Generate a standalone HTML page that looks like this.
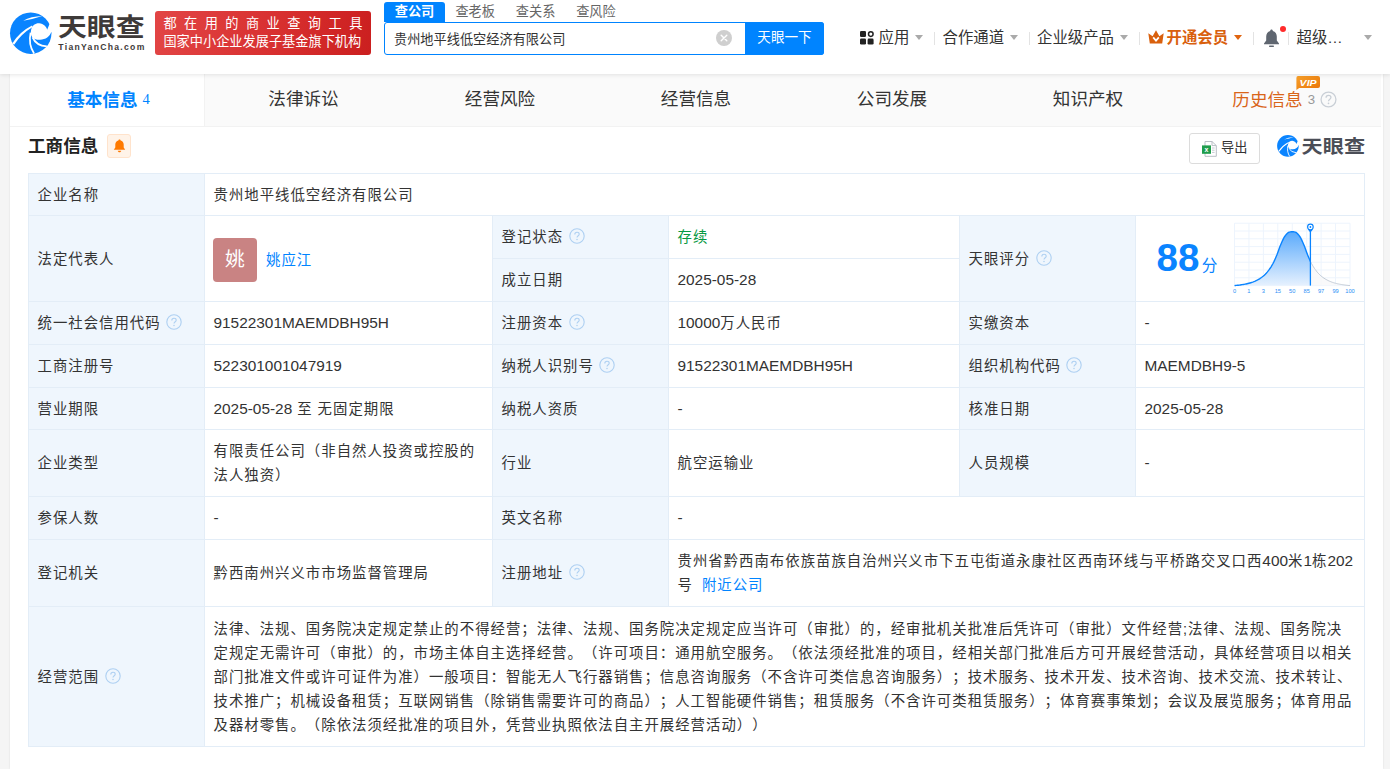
<!DOCTYPE html>
<html lang="zh-CN">
<head>
<meta charset="utf-8">
<title>贵州地平线低空经济有限公司 - 天眼查</title>
<style>
*{box-sizing:border-box;margin:0;padding:0}
html,body{width:1390px;height:769px;overflow:hidden}
body{background:#f5f5f5;font-family:"Liberation Sans","Noto Sans CJK SC",sans-serif;color:#333;font-size:15.4px;position:relative}
a{color:#0084ff;text-decoration:none}
.abs{position:absolute}
/* ---------- header ---------- */
#header{position:absolute;left:0;top:0;width:1390px;height:74px;background:#fff;box-shadow:0 1px 4px rgba(0,0,0,.10);z-index:5}
#logo{position:absolute;left:0;top:0;width:150px;height:74px}
#slogan{position:absolute;left:155px;top:11px;width:216px;height:44px;border-radius:3px;background:linear-gradient(100deg,#e24545 0%,#d83030 55%,#cb1f1f 100%);color:#fff;font-size:13.2px;line-height:18px;padding:4px 0 0 8.4px;white-space:nowrap}
#slogan .l1{letter-spacing:7.45px;display:block;height:18px}
#slogan .l2{display:block;height:18px}
#stabs{position:absolute;left:384px;top:2px;height:20px;font-size:13.2px;line-height:19px;color:#666;white-space:nowrap}
#stabs span{display:inline-block;width:60.4px;height:20px;text-align:center;vertical-align:top}
#stabs span.on{background:#0084ff;color:#fff;font-weight:bold;border-radius:3px 3px 0 0;width:61px}
#sbox{position:absolute;left:384px;top:22px;width:440px;height:33px;border:1px solid #0084ff;border-radius:3px;background:#fff}
#sbox .txt{position:absolute;left:9px;top:1px;line-height:32px;font-size:13.2px;color:#333;white-space:nowrap}
#sbox .clr{position:absolute;left:331px;top:7px;width:16px;height:16px}
#sbtn{position:absolute;left:745px;top:22px;width:79px;height:33px;background:#0084ff;border-radius:0 3px 3px 0;color:#fff;font-size:13.6px;line-height:32px;text-align:center;white-space:nowrap}
.nav{position:absolute;top:26px;height:24px;line-height:24px;font-size:15.4px;color:#333;white-space:nowrap}
.sep{position:absolute;top:32px;width:1px;height:13px;background:#e3e3e3}
.tri{position:absolute;top:35px;width:0;height:0;border-left:4px solid transparent;border-right:4px solid transparent;border-top:5px solid #aaa}
/* ---------- main ---------- */
#main{position:absolute;left:10px;top:74px;width:1373px;height:695px;background:#fff;box-shadow:0 0 2px rgba(0,0,0,.10)}
#tabs{position:absolute;left:0;top:0;width:1371px;height:53px;background:#fafafa;border-bottom:1px solid #f2f2f2;font-size:17.6px;white-space:nowrap}
#tabs .t{position:absolute;top:0;height:52px;line-height:51px;text-align:center;color:#333}
#tabs .t.on{background:#fff;color:#0084ff;font-weight:bold;border-right:1px solid #f2f2f2}
#tabs .t.on i{font-style:normal;font-weight:normal;font-family:"Liberation Serif",serif;font-size:14.5px;margin-left:5px;position:relative;top:-2px}
#tabs .t.his{color:#d9651a}
#title{position:absolute;left:18px;top:60px;font-size:17.6px;font-weight:bold;line-height:24px;color:#222}
#bellbox{position:absolute;left:97px;top:60px;width:24px;height:24px;border:1px solid #ffe3cc;background:#fff3e8;border-radius:3px}
#export{position:absolute;left:1179px;top:59px;width:71px;height:31px;border:1px solid #dcdcdc;border-radius:3px;background:#fff;font-size:13.2px;line-height:27px;color:#333;padding-left:31px;white-space:nowrap}
/* ---------- table ---------- */
#tb{position:absolute;left:18px;top:99px;width:1336px;border-collapse:collapse;table-layout:fixed;font-size:14.4px;letter-spacing:1px;line-height:24px;color:#333}
.en{font-size:15.4px;letter-spacing:0}
#tb td{text-spacing-trim:space-all;border:1px solid #e3edf7;padding:0 9px 0 8.5px;vertical-align:middle;word-break:break-all;background:#fff}
#tb td.k{background:#eff6fd}
.q{display:inline-block;width:16px;height:16px;vertical-align:-2.4px;margin-left:5.6px}
.g{color:#089944}
</style>
</head>
<body>

<div id="header">
  <!-- LOGO -->
  <svg id="logo" viewBox="0 0 150 74">
    <g id="swirl" transform="translate(10,12.6) scale(0.0644)">
      <circle cx="322" cy="320" r="322" fill="#0a84ff"/>
      <g transform="translate(-78,-70)" fill="#fff">
        <path d="M655,335 C645,290 600,245 530,237 C470,235 425,270 408,330 C398,370 398,420 425,455 C450,485 500,494 545,492 C630,490 700,440 718,372 L770,372 L770,245 L690,252 Z"/>
        <path d="M420,272 Q232,366 116,546 L142,568 Q254,398 430,294 Z"/>
        <path d="M284,198 Q400,128 580,124 Q440,172 284,198 Z"/>
        <path d="M398,380 C372,500 396,620 452,705" fill="none" stroke="#fff" stroke-width="27"/>
        <path d="M428,456 Q482,584 650,596" fill="none" stroke="#fff" stroke-width="27"/>
      </g>
    </g>
    <text x="58" y="36.4" font-family="'Noto Sans CJK SC','Liberation Sans',sans-serif" font-weight="700" font-size="25.4" fill="#3e3a39" textLength="86.5" lengthAdjust="spacingAndGlyphs">天眼查</text>
    <text x="58.3" y="50.2" font-family="'Liberation Sans',sans-serif" font-weight="bold" font-size="8.6" fill="#3e3a39" textLength="86" lengthAdjust="spacing">TianYanCha.com</text>
  </svg>

  <div id="slogan"><span class="l1">都在用的商业查询工具</span><span class="l2">国家中小企业发展子基金旗下机构</span></div>

  <div id="stabs"><span class="on">查公司</span><span>查老板</span><span>查关系</span><span>查风险</span></div>
  <div id="sbox">
    <div class="txt">贵州地平线低空经济有限公司</div>
    <svg class="clr" viewBox="0 0 16 16"><circle cx="8" cy="8" r="8" fill="#cfcfcf"/><path d="M5.2,5.2 L10.8,10.8 M10.8,5.2 L5.2,10.8" stroke="#fff" stroke-width="1.4" stroke-linecap="round"/></svg>
  </div>
  <div id="sbtn">天眼一下</div>

  <!-- nav -->
  <svg class="abs" style="left:860px;top:31px;width:14px;height:14px" viewBox="0 0 14 14"><rect x="0" y="0" width="6" height="6" rx="1.3" fill="#222"/><circle cx="10.8" cy="3.1" r="2.3" fill="none" stroke="#222" stroke-width="1.5"/><rect x="0" y="7.6" width="6" height="6" rx="1.3" fill="#222"/><rect x="7.6" y="7.6" width="6" height="6" rx="1.3" fill="#222"/></svg>
  <div class="nav" style="left:878.5px">应用</div><div class="tri" style="left:914.5px"></div>
  <div class="sep" style="left:934px"></div>
  <div class="nav" style="left:942.5px">合作通道</div><div class="tri" style="left:1009.5px"></div>
  <div class="sep" style="left:1029px"></div>
  <div class="nav" style="left:1037px">企业级产品</div><div class="tri" style="left:1119.5px"></div>
  <div class="sep" style="left:1139px"></div>
  <svg class="abs" style="left:1148px;top:30px;width:16px;height:14px" viewBox="0 0 16 14"><path d="M0.3,3.2 L4.6,6.2 L8,0.2 L11.4,6.2 L15.7,3.2 L14.2,13.6 L1.8,13.6 Z" fill="#d9600d"/><path d="M5.2,7.4 L8,10.6 L10.8,7.4" fill="none" stroke="#fff" stroke-width="1.7"/></svg>
  <div class="nav" style="left:1166.5px;color:#d9600d;font-weight:bold">开通会员</div><div class="tri" style="left:1234px;border-top-color:#e0640f"></div>
  <div class="sep" style="left:1253px"></div>
  <svg class="abs" style="left:1263px;top:29px;width:17px;height:19px" viewBox="0 0 17 19"><path d="M8.5,0.6 C9.3,0.6 9.8,1.2 9.8,2 C12.4,2.7 13.8,4.9 13.8,7.6 L13.8,11.6 L16,14.6 L16,15.2 L1,15.2 L1,14.6 L3.2,11.6 L3.2,7.6 C3.2,4.9 4.6,2.7 7.2,2 C7.2,1.2 7.7,0.6 8.5,0.6 Z" fill="#5f6670"/><rect x="6" y="16.6" width="5" height="1.4" rx=".7" fill="#5f6670"/></svg>
  <div class="abs" style="left:1280px;top:26px;width:6px;height:6px;border-radius:50%;background:#ff2b2b"></div>
  <div class="sep" style="left:1288px"></div>
  <div class="nav" style="left:1296.5px">超级…</div><div class="tri" style="left:1363.5px"></div>
</div>

<div id="main">
  <div id="tabs">
    <div class="t on" style="left:0;width:195px;padding-left:3px;line-height:53px">基本信息<i>4</i></div>
    <div class="t" style="left:195px;width:197px">法律诉讼</div>
    <div class="t" style="left:392px;width:196px">经营风险</div>
    <div class="t" style="left:588px;width:196px">经营信息</div>
    <div class="t" style="left:784px;width:196px">公司发展</div>
    <div class="t" style="left:980px;width:196px">知识产权</div>
    <div class="t his" style="left:1176px;width:195px"><span style="position:relative;left:1.2px;top:0.5px">历史信息<span style="font-size:13.2px;color:#999;margin-left:5px;position:relative;top:-2px">3</span><svg style="width:17px;height:17px;vertical-align:-2px;margin-left:5px" viewBox="0 0 16 16"><circle cx="8" cy="8" r="7" fill="none" stroke="#c9cfd6" stroke-width="1.2"/><path d="M5.7,6.3 C5.7,4.9 6.7,4.2 8,4.2 C9.3,4.2 10.3,5 10.3,6.2 C10.3,7.7 8,7.8 8,9.6" fill="none" stroke="#c9cfd6" stroke-width="1.2"/><circle cx="8" cy="11.6" r=".8" fill="#c9cfd6"/></svg></span>
      <svg class="abs" style="left:109.5px;top:2.3px;width:25px;height:14px" viewBox="0 0 25 14"><defs><linearGradient id="vg" x1="0" y1="0" x2="1" y2="1"><stop offset="0" stop-color="#f7a02a"/><stop offset="1" stop-color="#ea7407"/></linearGradient></defs><path d="M2,0 H22 Q24,0 24,2 V10 Q24,12 22,12 H3.2 L0.4,14 V2 Q0.4,0 2,0 Z" fill="url(#vg)"/><text x="3.6" y="9.8" font-family="'Liberation Sans',sans-serif" font-weight="bold" font-style="italic" font-size="9.6" fill="#fff" textLength="17" lengthAdjust="spacingAndGlyphs">VIP</text></svg>
    </div>
  </div>

  <div id="title">工商信息</div>
  <div id="bellbox"><svg style="position:absolute;left:4.5px;top:4px;width:13px;height:14px" viewBox="0 0 12 13"><path d="M6,0.4 C6.6,0.4 7,0.8 7,1.3 C8.9,1.8 9.9,3.3 9.9,5.2 L9.9,8 L11.3,10 L0.7,10 L2.1,8 L2.1,5.2 C2.1,3.3 3.1,1.8 5,1.3 C5,0.8 5.4,0.4 6,0.4 Z" fill="#ff7a00"/><path d="M4.4,10.8 H7.6 C7.4,11.7 6.8,12.2 6,12.2 C5.2,12.2 4.6,11.7 4.4,10.8 Z" fill="#ff7a00"/></svg></div>

  <div id="export">导出
    <svg class="abs" style="left:12px;top:7px;width:15px;height:16px" viewBox="0 0 15 16"><path d="M3,0.5 H10 L14.3,4.6 V15.3 H3 Z" fill="#fff" stroke="#b9bec5" stroke-width="1"/><path d="M10,0.5 V4.6 H14.3" fill="none" stroke="#b9bec5" stroke-width="1"/><path d="M10,7 H12.6 M10,9.2 H12.6 M10,11.4 H12.6" stroke="#c5cad1" stroke-width="1"/><rect x="0" y="4.4" width="9" height="8.4" fill="#1f9d4c"/><text x="4.5" y="11.2" text-anchor="middle" font-family="'Liberation Sans',sans-serif" font-weight="bold" font-size="7" fill="#fff">x</text></svg>
  </div>

  <svg class="abs" style="left:1266px;top:60px;width:92px;height:24px" viewBox="0 0 92 24">
    <g transform="translate(1.1,1.1) scale(0.0336)">
      <circle cx="322" cy="320" r="322" fill="#0a84ff"/>
      <g transform="translate(-78,-70)" fill="#fff">
        <path d="M655,335 C645,290 600,245 530,237 C470,235 425,270 408,330 C398,370 398,420 425,455 C450,485 500,494 545,492 C630,490 700,440 718,372 L770,372 L770,245 L690,252 Z"/>
        <path d="M420,272 Q232,366 116,546 L142,568 Q254,398 430,294 Z"/>
        <path d="M284,198 Q400,128 580,124 Q440,172 284,198 Z"/>
        <path d="M398,380 C372,500 396,620 452,705" fill="none" stroke="#fff" stroke-width="27"/>
        <path d="M428,456 Q482,584 650,596" fill="none" stroke="#fff" stroke-width="27"/>
      </g>
    </g>
    <text x="25.6" y="19" font-family="'Noto Sans CJK SC','Liberation Sans',sans-serif" font-weight="700" font-size="18.2" fill="#4b4e57" textLength="63.5" lengthAdjust="spacingAndGlyphs">天眼查</text>
  </svg>

  <table id="tb">
    <colgroup><col style="width:176px"><col style="width:288px"><col style="width:176px"><col style="width:291px"><col style="width:176px"><col style="width:229px"></colgroup>
    <tr style="height:42px"><td class="k">企业名称</td><td colspan="5">贵州地平线低空经济有限公司</td></tr>
    <tr style="height:43px"><td class="k" rowspan="2">法定代表人</td><td rowspan="2"><span style="display:inline-block;width:44px;height:44px;border-radius:4px;background:#c98383;color:#fff;font-size:19.8px;line-height:43px;text-align:center;vertical-align:middle;margin-left:-0.5px;letter-spacing:0;position:relative;top:1px">姚</span><a style="margin-left:9px;vertical-align:middle;position:relative;top:1px">姚应江</a></td><td class="k">登记状态<svg class="q" viewBox="0 0 16 16"><use href="#qm"/></svg></td><td class="g">存续</td><td class="k" rowspan="2">天眼评分<svg class="q" viewBox="0 0 16 16"><use href="#qm"/></svg></td><td rowspan="2" style="padding:0;position:relative" id="scorecell" class="en"><div style="position:relative;width:228px;height:85px"><svg class="abs" style="left:0;top:0;width:228px;height:85px" viewBox="0 0 228 85"><defs><linearGradient id="cg" x1="0" y1="0" x2="0" y2="1"><stop offset="0" stop-color="#5aaafc"/><stop offset="1" stop-color="#e6f1fe"/></linearGradient><clipPath id="cl"><rect x="0" y="0" width="174.4" height="85"/></clipPath><clipPath id="cr"><rect x="174.4" y="0" width="100" height="85"/></clipPath></defs><path d="M98.5,7.2V69.6M112.94,7.2V69.6M127.38,7.2V69.6M141.81,7.2V69.6M156.25,7.2V69.6M170.69,7.2V69.6M185.12,7.2V69.6M199.56,7.2V69.6M214.0,7.2V69.6M98.5,7.2H214.0M98.5,15.0H214.0M98.5,22.8H214.0M98.5,30.6H214.0M98.5,38.4H214.0M98.5,46.2H214.0M98.5,54.0H214.0M98.5,61.8H214.0M98.5,69.6H214.0" stroke="#edf4fd" stroke-width="1" fill="none"/><path d="M98.5,69.6 L99.46,69.49 L100.42,69.39 L101.39,69.29 L102.35,69.19 L103.31,69.07 L104.28,68.95 L105.24,68.81 L106.2,68.67 L107.16,68.51 L108.12,68.34 L109.09,68.16 L110.05,67.96 L111.01,67.75 L111.97,67.52 L112.94,67.27 L113.9,67.0 L114.86,66.71 L115.83,66.4 L116.79,66.07 L117.75,65.7 L118.71,65.3 L119.67,64.86 L120.64,64.4 L121.6,63.9 L122.56,63.36 L123.53,62.8 L124.49,62.19 L125.45,61.51 L126.41,60.79 L127.38,60.0 L128.34,59.15 L129.3,58.23 L130.26,57.23 L131.22,56.13 L132.19,54.92 L133.15,53.63 L134.11,52.24 L135.08,50.76 L136.04,49.2 L137.0,47.51 L137.96,45.59 L138.92,43.5 L139.89,41.28 L140.85,38.98 L141.81,36.4 L142.78,33.66 L143.74,31.05 L144.7,28.74 L145.66,26.49 L146.62,24.34 L147.59,22.39 L148.55,20.73 L149.51,19.41 L150.47,18.2 L151.44,17.18 L152.4,16.49 L153.36,16.17 L154.33,15.92 L155.29,15.76 L156.25,15.7 L157.21,15.76 L158.17,15.92 L159.14,16.17 L160.1,16.49 L161.06,17.18 L162.03,18.2 L162.99,19.41 L163.95,20.73 L164.91,22.39 L165.88,24.34 L166.84,26.49 L167.8,28.74 L168.76,31.05 L169.72,33.66 L170.69,36.4 L171.65,38.98 L172.61,41.28 L173.58,43.5 L174.54,45.59 L175.5,47.51 L176.46,49.2 L177.42,50.76 L178.39,52.24 L179.35,53.63 L180.31,54.92 L181.28,56.13 L182.24,57.23 L183.2,58.23 L184.16,59.15 L185.12,60.0 L186.09,60.79 L187.05,61.51 L188.01,62.19 L188.97,62.8 L189.94,63.36 L190.9,63.9 L191.86,64.4 L192.83,64.86 L193.79,65.3 L194.75,65.7 L195.71,66.07 L196.67,66.4 L197.64,66.71 L198.6,67.0 L199.56,67.27 L200.53,67.52 L201.49,67.75 L202.45,67.96 L203.41,68.16 L204.38,68.34 L205.34,68.51 L206.3,68.67 L207.26,68.81 L208.22,68.95 L209.19,69.07 L210.15,69.19 L211.11,69.29 L212.08,69.39 L213.04,69.49 L214.0,69.6 L214.0,69.6 L98.5,69.6 Z" fill="#f7f8f9" opacity=".8" clip-path="url(#cr)"/><path d="M98.5,69.6 L99.46,69.49 L100.42,69.39 L101.39,69.29 L102.35,69.19 L103.31,69.07 L104.28,68.95 L105.24,68.81 L106.2,68.67 L107.16,68.51 L108.12,68.34 L109.09,68.16 L110.05,67.96 L111.01,67.75 L111.97,67.52 L112.94,67.27 L113.9,67.0 L114.86,66.71 L115.83,66.4 L116.79,66.07 L117.75,65.7 L118.71,65.3 L119.67,64.86 L120.64,64.4 L121.6,63.9 L122.56,63.36 L123.53,62.8 L124.49,62.19 L125.45,61.51 L126.41,60.79 L127.38,60.0 L128.34,59.15 L129.3,58.23 L130.26,57.23 L131.22,56.13 L132.19,54.92 L133.15,53.63 L134.11,52.24 L135.08,50.76 L136.04,49.2 L137.0,47.51 L137.96,45.59 L138.92,43.5 L139.89,41.28 L140.85,38.98 L141.81,36.4 L142.78,33.66 L143.74,31.05 L144.7,28.74 L145.66,26.49 L146.62,24.34 L147.59,22.39 L148.55,20.73 L149.51,19.41 L150.47,18.2 L151.44,17.18 L152.4,16.49 L153.36,16.17 L154.33,15.92 L155.29,15.76 L156.25,15.7 L157.21,15.76 L158.17,15.92 L159.14,16.17 L160.1,16.49 L161.06,17.18 L162.03,18.2 L162.99,19.41 L163.95,20.73 L164.91,22.39 L165.88,24.34 L166.84,26.49 L167.8,28.74 L168.76,31.05 L169.72,33.66 L170.69,36.4 L171.65,38.98 L172.61,41.28 L173.58,43.5 L174.54,45.59 L175.5,47.51 L176.46,49.2 L177.42,50.76 L178.39,52.24 L179.35,53.63 L180.31,54.92 L181.28,56.13 L182.24,57.23 L183.2,58.23 L184.16,59.15 L185.12,60.0 L186.09,60.79 L187.05,61.51 L188.01,62.19 L188.97,62.8 L189.94,63.36 L190.9,63.9 L191.86,64.4 L192.83,64.86 L193.79,65.3 L194.75,65.7 L195.71,66.07 L196.67,66.4 L197.64,66.71 L198.6,67.0 L199.56,67.27 L200.53,67.52 L201.49,67.75 L202.45,67.96 L203.41,68.16 L204.38,68.34 L205.34,68.51 L206.3,68.67 L207.26,68.81 L208.22,68.95 L209.19,69.07 L210.15,69.19 L211.11,69.29 L212.08,69.39 L213.04,69.49 L214.0,69.6" fill="none" stroke="#c3cbd6" stroke-width="1" clip-path="url(#cr)"/><path d="M98.5,69.6 L99.46,69.49 L100.42,69.39 L101.39,69.29 L102.35,69.19 L103.31,69.07 L104.28,68.95 L105.24,68.81 L106.2,68.67 L107.16,68.51 L108.12,68.34 L109.09,68.16 L110.05,67.96 L111.01,67.75 L111.97,67.52 L112.94,67.27 L113.9,67.0 L114.86,66.71 L115.83,66.4 L116.79,66.07 L117.75,65.7 L118.71,65.3 L119.67,64.86 L120.64,64.4 L121.6,63.9 L122.56,63.36 L123.53,62.8 L124.49,62.19 L125.45,61.51 L126.41,60.79 L127.38,60.0 L128.34,59.15 L129.3,58.23 L130.26,57.23 L131.22,56.13 L132.19,54.92 L133.15,53.63 L134.11,52.24 L135.08,50.76 L136.04,49.2 L137.0,47.51 L137.96,45.59 L138.92,43.5 L139.89,41.28 L140.85,38.98 L141.81,36.4 L142.78,33.66 L143.74,31.05 L144.7,28.74 L145.66,26.49 L146.62,24.34 L147.59,22.39 L148.55,20.73 L149.51,19.41 L150.47,18.2 L151.44,17.18 L152.4,16.49 L153.36,16.17 L154.33,15.92 L155.29,15.76 L156.25,15.7 L157.21,15.76 L158.17,15.92 L159.14,16.17 L160.1,16.49 L161.06,17.18 L162.03,18.2 L162.99,19.41 L163.95,20.73 L164.91,22.39 L165.88,24.34 L166.84,26.49 L167.8,28.74 L168.76,31.05 L169.72,33.66 L170.69,36.4 L171.65,38.98 L172.61,41.28 L173.58,43.5 L174.54,45.59 L175.5,47.51 L176.46,49.2 L177.42,50.76 L178.39,52.24 L179.35,53.63 L180.31,54.92 L181.28,56.13 L182.24,57.23 L183.2,58.23 L184.16,59.15 L185.12,60.0 L186.09,60.79 L187.05,61.51 L188.01,62.19 L188.97,62.8 L189.94,63.36 L190.9,63.9 L191.86,64.4 L192.83,64.86 L193.79,65.3 L194.75,65.7 L195.71,66.07 L196.67,66.4 L197.64,66.71 L198.6,67.0 L199.56,67.27 L200.53,67.52 L201.49,67.75 L202.45,67.96 L203.41,68.16 L204.38,68.34 L205.34,68.51 L206.3,68.67 L207.26,68.81 L208.22,68.95 L209.19,69.07 L210.15,69.19 L211.11,69.29 L212.08,69.39 L213.04,69.49 L214.0,69.6 L214.0,69.6 L98.5,69.6 Z" fill="url(#cg)" clip-path="url(#cl)"/><path d="M98.5,69.6 L99.46,69.49 L100.42,69.39 L101.39,69.29 L102.35,69.19 L103.31,69.07 L104.28,68.95 L105.24,68.81 L106.2,68.67 L107.16,68.51 L108.12,68.34 L109.09,68.16 L110.05,67.96 L111.01,67.75 L111.97,67.52 L112.94,67.27 L113.9,67.0 L114.86,66.71 L115.83,66.4 L116.79,66.07 L117.75,65.7 L118.71,65.3 L119.67,64.86 L120.64,64.4 L121.6,63.9 L122.56,63.36 L123.53,62.8 L124.49,62.19 L125.45,61.51 L126.41,60.79 L127.38,60.0 L128.34,59.15 L129.3,58.23 L130.26,57.23 L131.22,56.13 L132.19,54.92 L133.15,53.63 L134.11,52.24 L135.08,50.76 L136.04,49.2 L137.0,47.51 L137.96,45.59 L138.92,43.5 L139.89,41.28 L140.85,38.98 L141.81,36.4 L142.78,33.66 L143.74,31.05 L144.7,28.74 L145.66,26.49 L146.62,24.34 L147.59,22.39 L148.55,20.73 L149.51,19.41 L150.47,18.2 L151.44,17.18 L152.4,16.49 L153.36,16.17 L154.33,15.92 L155.29,15.76 L156.25,15.7 L157.21,15.76 L158.17,15.92 L159.14,16.17 L160.1,16.49 L161.06,17.18 L162.03,18.2 L162.99,19.41 L163.95,20.73 L164.91,22.39 L165.88,24.34 L166.84,26.49 L167.8,28.74 L168.76,31.05 L169.72,33.66 L170.69,36.4 L171.65,38.98 L172.61,41.28 L173.58,43.5 L174.54,45.59 L175.5,47.51 L176.46,49.2 L177.42,50.76 L178.39,52.24 L179.35,53.63 L180.31,54.92 L181.28,56.13 L182.24,57.23 L183.2,58.23 L184.16,59.15 L185.12,60.0 L186.09,60.79 L187.05,61.51 L188.01,62.19 L188.97,62.8 L189.94,63.36 L190.9,63.9 L191.86,64.4 L192.83,64.86 L193.79,65.3 L194.75,65.7 L195.71,66.07 L196.67,66.4 L197.64,66.71 L198.6,67.0 L199.56,67.27 L200.53,67.52 L201.49,67.75 L202.45,67.96 L203.41,68.16 L204.38,68.34 L205.34,68.51 L206.3,68.67 L207.26,68.81 L208.22,68.95 L209.19,69.07 L210.15,69.19 L211.11,69.29 L212.08,69.39 L213.04,69.49 L214.0,69.6" fill="none" stroke="#0a84ff" stroke-width="1.4" clip-path="url(#cl)"/><path d="M174.4,14V69.6" stroke="#0a84ff" stroke-width="1.3"/><path d="M174.4,16.8 C173.20000000000002,14.8 171.0,13.3 171.0,11 A3.4,3.4 0 1 1 177.8,11 C177.8,13.3 175.6,14.8 174.4,16.8 Z" fill="#0a84ff"/><circle cx="174.4" cy="11" r="2.2" fill="#fff"/><circle cx="174.4" cy="11" r="0.9" fill="#0a84ff"/><text x="98.5" y="77.4" text-anchor="middle" font-family="'Liberation Sans',sans-serif" font-size="5.7" fill="#2b8ff5">0</text><text x="112.94" y="77.4" text-anchor="middle" font-family="'Liberation Sans',sans-serif" font-size="5.7" fill="#2b8ff5">1</text><text x="127.38" y="77.4" text-anchor="middle" font-family="'Liberation Sans',sans-serif" font-size="5.7" fill="#2b8ff5">3</text><text x="141.81" y="77.4" text-anchor="middle" font-family="'Liberation Sans',sans-serif" font-size="5.7" fill="#2b8ff5">15</text><text x="156.25" y="77.4" text-anchor="middle" font-family="'Liberation Sans',sans-serif" font-size="5.7" fill="#2b8ff5">50</text><text x="170.69" y="77.4" text-anchor="middle" font-family="'Liberation Sans',sans-serif" font-size="5.7" fill="#2b8ff5">85</text><text x="185.12" y="77.4" text-anchor="middle" font-family="'Liberation Sans',sans-serif" font-size="5.7" fill="#2b8ff5">97</text><text x="199.56" y="77.4" text-anchor="middle" font-family="'Liberation Sans',sans-serif" font-size="5.7" fill="#2b8ff5">99</text><text x="214.0" y="77.4" text-anchor="middle" font-family="'Liberation Sans',sans-serif" font-size="5.7" fill="#2b8ff5">100</text></svg><div class="abs" style="left:20.4px;top:20px;font-size:38.5px;line-height:44px;font-weight:bold;color:#0a84ff;letter-spacing:0.2px;white-space:nowrap">88<span style="font-size:15.6px;font-weight:normal;margin-left:2px;letter-spacing:0;font-family:'Noto Sans CJK SC',sans-serif">分</span></div></div></td></tr>
    <tr style="height:43px"><td class="k">成立日期</td><td><span class="en">2025-05-28</span></td></tr>
    <tr style="height:43px"><td class="k">统一社会信用代码<svg class="q" viewBox="0 0 16 16"><use href="#qm"/></svg></td><td><span class="en">91522301MAEMDBH95H</span></td><td class="k">注册资本<svg class="q" viewBox="0 0 16 16"><use href="#qm"/></svg></td><td><span class="en">10000</span>万人民币</td><td class="k">实缴资本</td><td><span class="en">-</span></td></tr>
    <tr style="height:43px"><td class="k">工商注册号</td><td><span class="en">522301001047919</span></td><td class="k">纳税人识别号<svg class="q" viewBox="0 0 16 16"><use href="#qm"/></svg></td><td><span class="en">91522301MAEMDBH95H</span></td><td class="k">组织机构代码<svg class="q" viewBox="0 0 16 16"><use href="#qm"/></svg></td><td><span class="en">MAEMDBH9-5</span></td></tr>
    <tr style="height:42px"><td class="k">营业期限</td><td><span class="en">2025-05-28</span> 至 无固定期限</td><td class="k">纳税人资质</td><td><span class="en">-</span></td><td class="k">核准日期</td><td><span class="en">2025-05-28</span></td></tr>
    <tr style="height:67px"><td class="k">企业类型</td><td>有限责任公司（非自然人投资或控股的法人独资）</td><td class="k">行业</td><td>航空运输业</td><td class="k">人员规模</td><td><span class="en">-</span></td></tr>
    <tr style="height:43px"><td class="k">参保人数</td><td><span class="en">-</span></td><td class="k">英文名称</td><td colspan="3"><span class="en">-</span></td></tr>
    <tr style="height:67px"><td class="k">登记机关</td><td>黔西南州兴义市市场监督管理局</td><td class="k">注册地址<svg class="q" viewBox="0 0 16 16"><use href="#qm"/></svg></td><td colspan="3">贵州省黔西南布依族苗族自治州兴义市下五屯街道永康社区西南环线与平桥路交叉口西<span class="en">400</span>米<span class="en">1</span>栋<span class="en">202</span>号 <a style="margin-left:4px">附近公司</a></td></tr>
    <tr style="height:140px"><td class="k">经营范围<svg class="q" viewBox="0 0 16 16"><use href="#qm"/></svg></td><td colspan="5">法律、法规、国务院决定规定禁止的不得经营；法律、法规、国务院决定规定应当许可（审批）的，经审批机关批准后凭许可（审批）文件经营;法律、法规、国务院决定规定无需许可（审批）的，市场主体自主选择经营。（许可项目：通用航空服务。（依法须经批准的项目，经相关部门批准后方可开展经营活动，具体经营项目以相关部门批准文件或许可证件为准）一般项目：智能无人飞行器销售；信息咨询服务（不含许可类信息咨询服务）；技术服务、技术开发、技术咨询、技术交流、技术转让、技术推广；机械设备租赁；互联网销售（除销售需要许可的商品）；人工智能硬件销售；租赁服务（不含许可类租赁服务）；体育赛事策划；会议及展览服务；体育用品及器材零售。（除依法须经批准的项目外，凭营业执照依法自主开展经营活动））</td></tr>
  </table>
</div>

<svg width="0" height="0" style="position:absolute"><defs><g id="qm"><circle cx="8" cy="8" r="7.2" fill="none" stroke="#aed0f2" stroke-width="1.1"/><path d="M5.8,6.4 C5.8,5 6.8,4.3 8,4.3 C9.3,4.3 10.2,5.1 10.2,6.2 C10.2,7.7 8,7.8 8,9.6" fill="none" stroke="#aed0f2" stroke-width="1.1"/><circle cx="8" cy="11.5" r=".75" fill="#aed0f2"/></g></defs></svg>
</body>
</html>
